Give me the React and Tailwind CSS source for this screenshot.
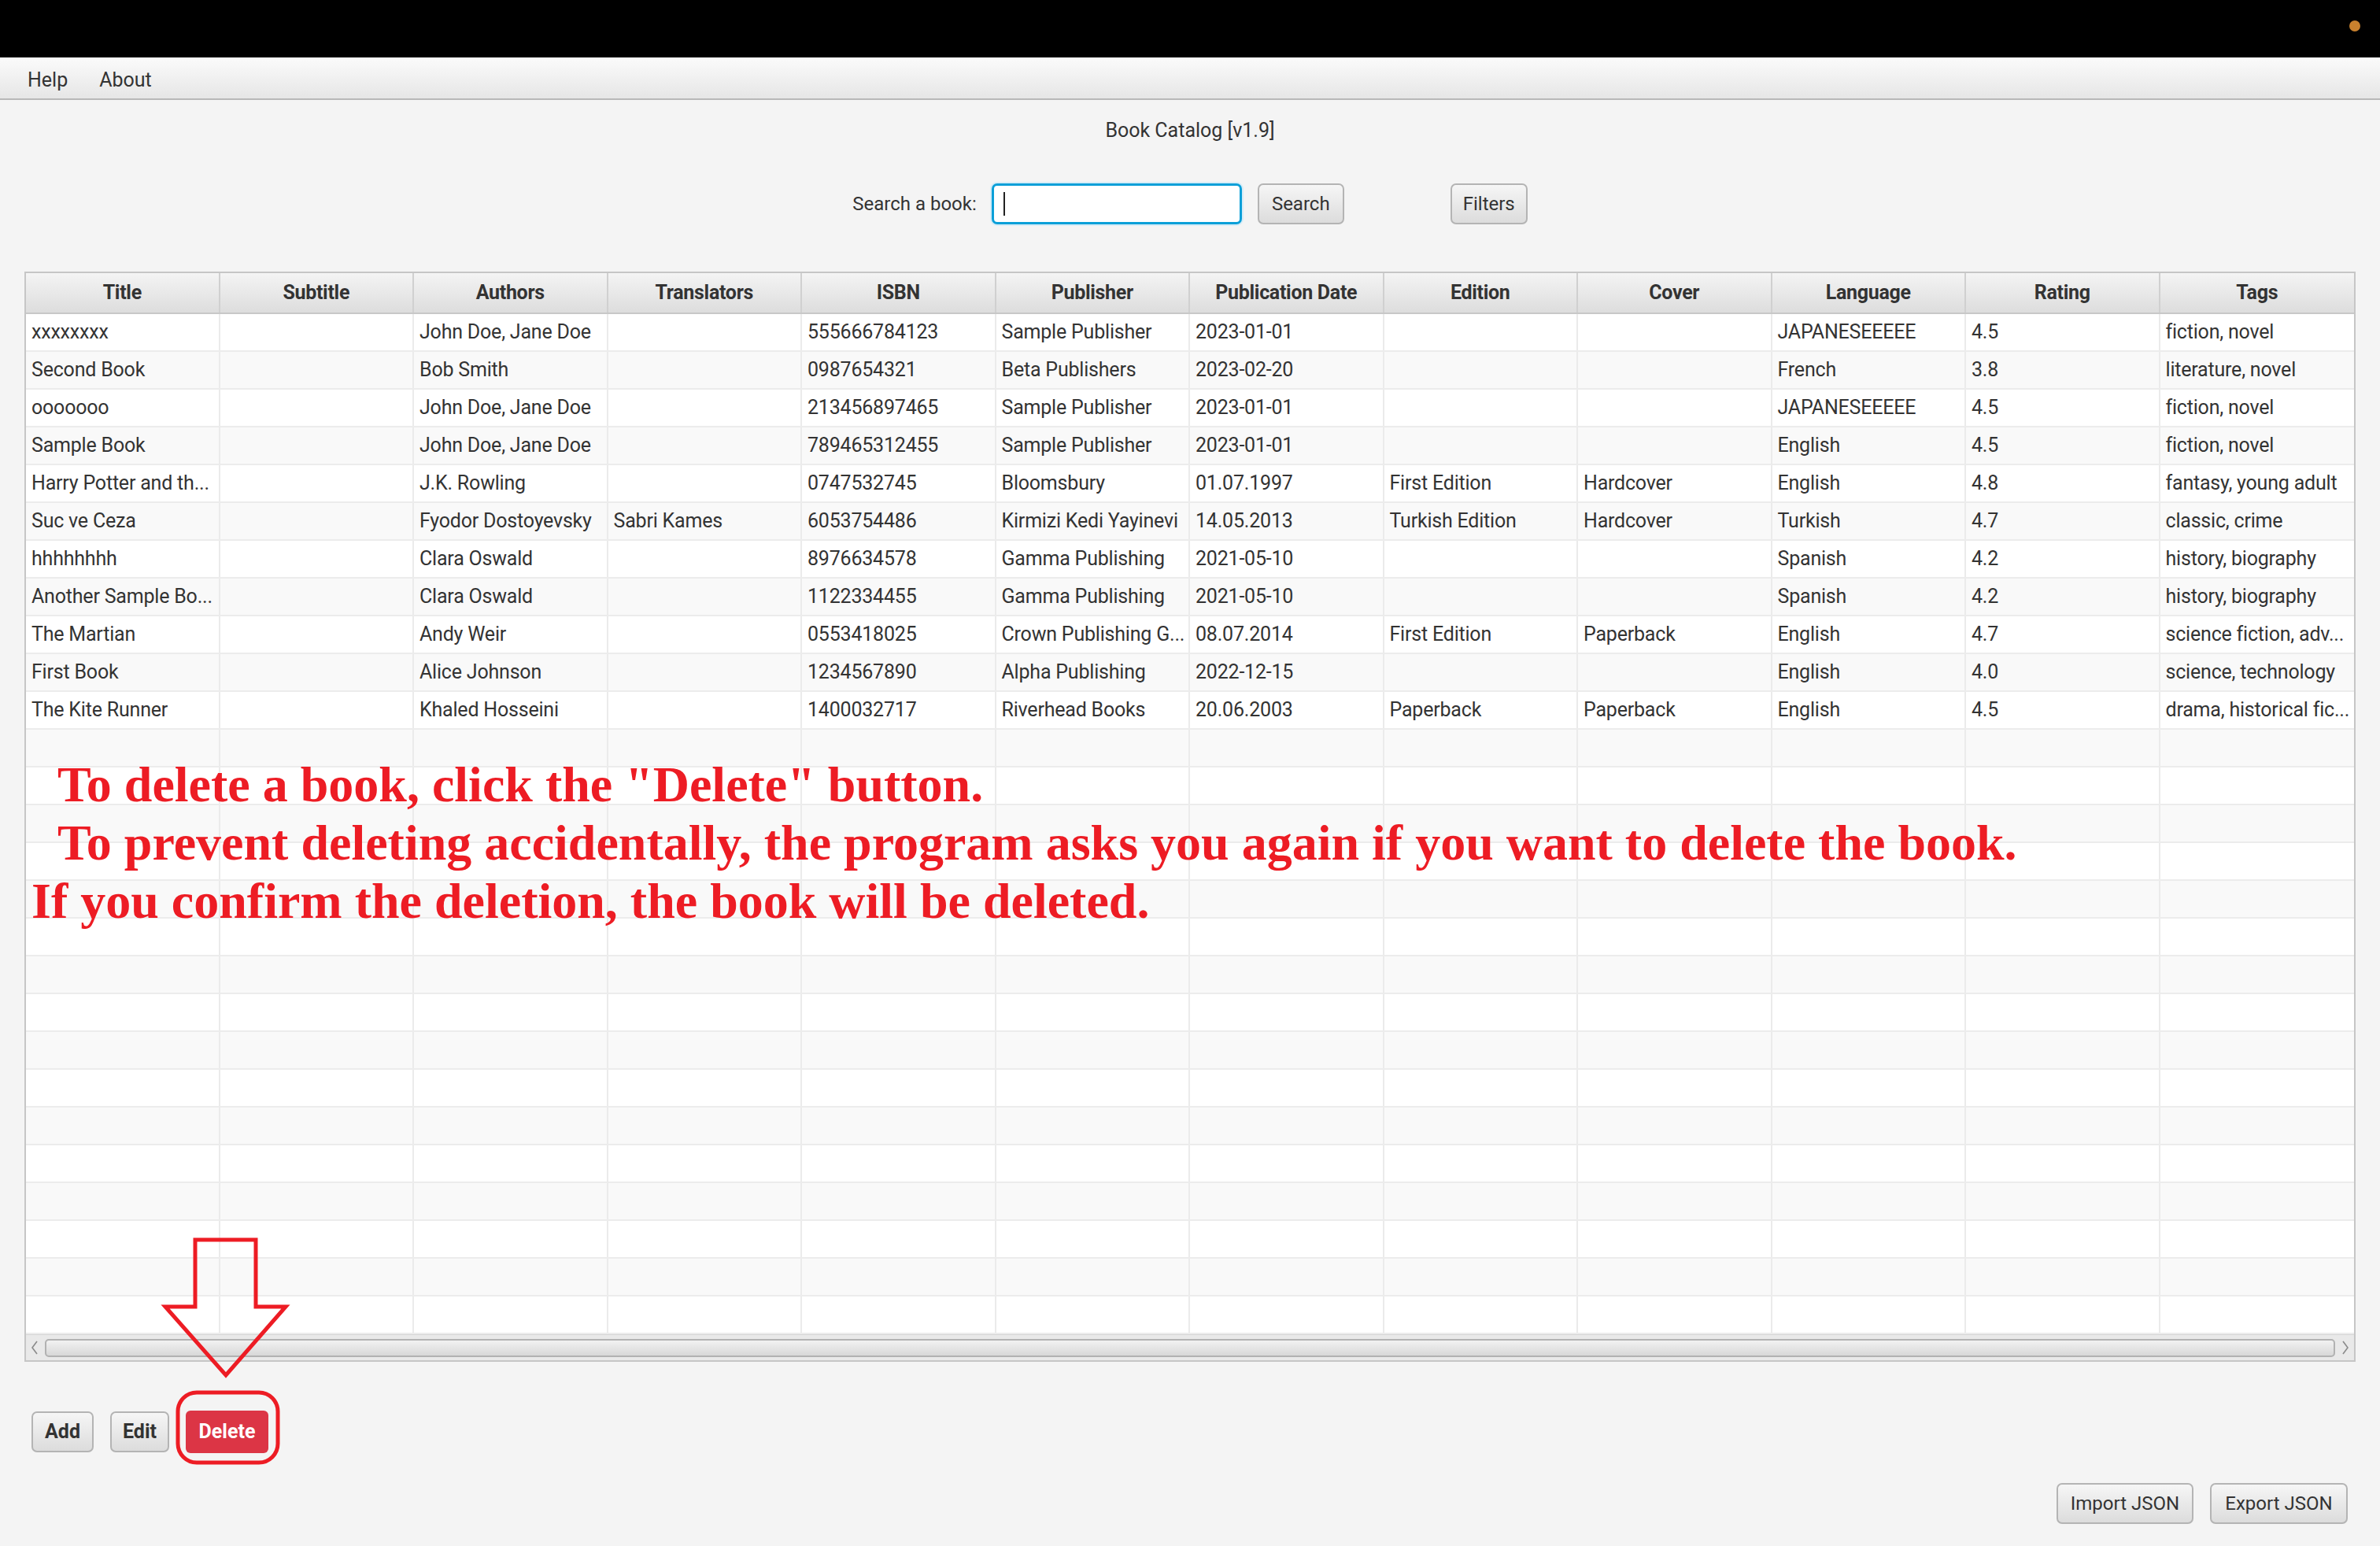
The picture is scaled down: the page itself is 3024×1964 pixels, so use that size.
import React from 'react';

const columns = [
  'Title', 'Subtitle', 'Authors', 'Translators', 'ISBN', 'Publisher',
  'Publication Date', 'Edition', 'Cover', 'Language', 'Rating', 'Tags',
];

const books = [
  ['xxxxxxxx', '', 'John Doe, Jane Doe', '', '555666784123', 'Sample Publisher', '2023-01-01', '', '', 'JAPANESEEEEE', '4.5', 'fiction, novel'],
  ['Second Book', '', 'Bob Smith', '', '0987654321', 'Beta Publishers', '2023-02-20', '', '', 'French', '3.8', 'literature, novel'],
  ['ooooooo', '', 'John Doe, Jane Doe', '', '213456897465', 'Sample Publisher', '2023-01-01', '', '', 'JAPANESEEEEE', '4.5', 'fiction, novel'],
  ['Sample Book', '', 'John Doe, Jane Doe', '', '789465312455', 'Sample Publisher', '2023-01-01', '', '', 'English', '4.5', 'fiction, novel'],
  ['Harry Potter and th...', '', 'J.K. Rowling', '', '0747532745', 'Bloomsbury', '01.07.1997', 'First Edition', 'Hardcover', 'English', '4.8', 'fantasy, young adult'],
  ['Suc ve Ceza', '', 'Fyodor Dostoyevsky', 'Sabri Kames', '6053754486', 'Kirmizi Kedi Yayinevi', '14.05.2013', 'Turkish Edition', 'Hardcover', 'Turkish', '4.7', 'classic, crime'],
  ['hhhhhhhh', '', 'Clara Oswald', '', '8976634578', 'Gamma Publishing', '2021-05-10', '', '', 'Spanish', '4.2', 'history, biography'],
  ['Another Sample Bo...', '', 'Clara Oswald', '', '1122334455', 'Gamma Publishing', '2021-05-10', '', '', 'Spanish', '4.2', 'history, biography'],
  ['The Martian', '', 'Andy Weir', '', '0553418025', 'Crown Publishing G...', '08.07.2014', 'First Edition', 'Paperback', 'English', '4.7', 'science fiction, adv...'],
  ['First Book', '', 'Alice Johnson', '', '1234567890', 'Alpha Publishing', '2022-12-15', '', '', 'English', '4.0', 'science, technology'],
  ['The Kite Runner', '', 'Khaled Hosseini', '', '1400032717', 'Riverhead Books', '20.06.2003', 'Paperback', 'Paperback', 'English', '4.5', 'drama, historical fic...'],
];

const TOTAL_ROWS = 27;

function FxButton({ children, bold, className = '' }) {
  return (
    <button
      className={`h-[52px] rounded-[7px] border-2 border-[#b4b4b4] bg-gradient-to-b from-[#f6f6f6] to-[#dcdcdc] text-[24px] text-[#333] ${bold ? 'font-bold' : ''} ${className}`}
    >
      {children}
    </button>
  );
}

export default function App() {
  const rows = [];
  for (let i = 0; i < TOTAL_ROWS; i++) {
    rows.push(books[i] || Array(12).fill(''));
  }

  return (
    <div className="relative w-[3024px] h-[1964px] overflow-hidden bg-[#f4f4f4] font-['Roboto',sans-serif] text-[#333]">
      {/* top bar */}
      <div className="h-[73px] bg-black flex justify-end items-start pt-[26px] pr-[25px]">
        <div className="w-[14px] h-[14px] rounded-full bg-[#c8812e]" />
      </div>

      {/* menu bar */}
      <div className="h-[54px] border-b-2 border-[#b8b8b8] bg-gradient-to-b from-[#fbfbfb] to-[#e6e6e6] flex items-center pt-[6px] pl-[35px] gap-[40px] text-[25px] text-[#333]">
        <span>Help</span>
        <span>About</span>
      </div>

      {/* title */}
      <div className="mt-[24px] h-[30px] leading-[30px] text-center text-[25px]">Book Catalog [v1.9]</div>

      {/* search row */}
      <div className="mt-[52px] h-[52px] flex items-center justify-center">
        <span className="text-[24px] mr-[19px]">Search a book:</span>
        <div className="w-[318px] h-[52px] rounded-[7px] border-[3px] border-[#0a9fd8] bg-white shadow-[0_0_0_2px_#d6ecf7] flex items-center pl-[12px]">
          <div className="w-[2px] h-[30px] bg-[#222]" />
        </div>
        <FxButton className="ml-[20px] w-[110px]">Search</FxButton>
        <FxButton className="ml-[135px] w-[98px]">Filters</FxButton>
      </div>

      {/* table */}
      <div className="mt-[60px] mx-[31px] border-2 border-[#c6c6c6] bg-white">
        <div className="grid grid-cols-12 h-[52px] border-b-2 border-[#c8c8c8] bg-gradient-to-b from-[#f4f4f4] to-[#dddddd]">
          {columns.map((c, i) => (
            <div
              key={c}
              className={`flex items-center justify-center font-bold text-[25px] tracking-[-0.3px] ${i < 11 ? 'border-r-2 border-[#d0d0d0]' : ''}`}
            >
              {c}
            </div>
          ))}
        </div>

        {rows.map((r, ri) => (
          <div
            key={ri}
            className={`grid grid-cols-12 h-[48px] border-b-2 border-[#ececec] ${ri % 2 === 0 ? 'bg-white' : 'bg-[#f9f9f9]'}`}
          >
            {r.map((cell, ci) => (
              <div
                key={ci}
                className={`flex items-center pl-[7px] text-[25px] tracking-[-0.2px] whitespace-nowrap overflow-hidden ${ci < 11 ? 'border-r-2 border-[#ebebeb]' : ''}`}
              >
                {cell}
              </div>
            ))}
          </div>
        ))}

        {/* horizontal scrollbar */}
        <div className="h-[33px] bg-[#e9e9e9] border-t border-[#d6d6d6] flex items-center px-[6px] gap-[8px]">
          <svg width="10" height="20" viewBox="0 0 10 20">
            <path d="M8 2 L2 10 L8 18" fill="none" stroke="#8a8a8a" strokeWidth="1.6" />
          </svg>
          <div className="flex-1 h-[23px] rounded-[5px] border-2 border-[#b2b2b2] bg-gradient-to-b from-[#f2f2f2] to-[#d8d8d8]" />
          <svg width="10" height="20" viewBox="0 0 10 20">
            <path d="M2 2 L8 10 L2 18" fill="none" stroke="#8a8a8a" strokeWidth="1.6" />
          </svg>
        </div>
      </div>

      {/* add / edit / delete */}
      <div className="mt-[62px] ml-[40px] flex items-center">
        <FxButton bold className="w-[79px] text-[25px]">Add</FxButton>
        <FxButton bold className="ml-[21px] w-[75px] text-[25px]">Edit</FxButton>
        <button className="ml-[21px] w-[105px] h-[54px] rounded-[6px] bg-[#dc3545] text-white font-bold text-[25px]">Delete</button>
      </div>

      {/* import / export */}
      <div className="mt-[38px] mr-[41px] flex justify-end gap-[21px]">
        <FxButton className="w-[174px]">Import JSON</FxButton>
        <FxButton className="w-[175px]">Export JSON</FxButton>
      </div>

      {/* annotation text over the table */}
      <div className="absolute left-0 top-[960px] font-['Liberation_Serif',serif] font-bold text-[64px] leading-[74px] text-[#ed1c24] whitespace-nowrap">
        <div className="pl-[73px]">To delete a book, click the "Delete" button.</div>
        <div className="pl-[73px]">To prevent deleting accidentally, the program asks you again if you want to delete the book.</div>
        <div className="pl-[40px]">If you confirm the deletion, the book will be deleted.</div>
      </div>

      {/* annotation arrow and highlight */}
      <svg className="absolute left-0 top-0 pointer-events-none" width="3024" height="1964">
        <polygon
          points="248,1575 325,1575 325,1660 363,1660 287,1747 210,1660 248,1660"
          fill="none"
          stroke="#ed1c24"
          strokeWidth="5"
        />
        <rect x="226" y="1769" width="127" height="89" rx="24" fill="none" stroke="#ed1c24" strokeWidth="5" />
      </svg>
    </div>
  );
}
